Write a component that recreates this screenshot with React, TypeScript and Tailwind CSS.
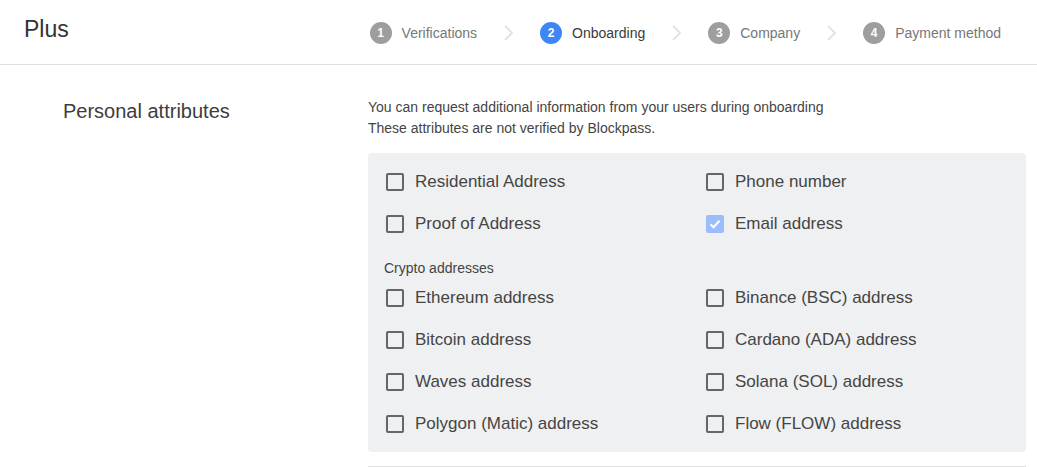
import React from "react"

const steps = [
  { n: 1, label: "Verifications" },
  { n: 2, label: "Onboarding", active: true },
  { n: 3, label: "Company" },
  { n: 4, label: "Payment method" },
]

const basic = [
  { label: "Residential Address" },
  { label: "Phone number" },
  { label: "Proof of Address" },
  { label: "Email address", checked: true },
]

const crypto = [
  "Ethereum address",
  "Binance (BSC) address",
  "Bitcoin address",
  "Cardano (ADA) address",
  "Waves address",
  "Solana (SOL) address",
  "Polygon (Matic) address",
  "Flow (FLOW) address",
]

function Chevron() {
  return (
    <svg width="13" height="18" viewBox="0 0 13 18" className="mx-[25px]">
      <path d="M3 2l7 7-7 7" fill="none" stroke="#e3e3e3" strokeWidth="2" />
    </svg>
  )
}

function Checkbox({ label, checked }: { label: string; checked?: boolean }) {
  return (
    <div className="h-[42px] flex items-center gap-[11px]">
      {checked ? (
        <span className="w-[18px] h-[18px] rounded-[2px] bg-[#9dbcfa] flex items-center justify-center">
          <svg width="14" height="14" viewBox="0 0 14 14">
            <path d="M2.5 7.2l3 3 6-6.4" fill="none" stroke="#fff" strokeWidth="2" />
          </svg>
        </span>
      ) : (
        <span className="w-[18px] h-[18px] rounded-[2px] border-2 border-[#666]" />
      )}
      <span className="text-[17px] text-[#454545]">{label}</span>
    </div>
  )
}

export default function App() {
  return (
    <div className="w-[1037px] h-[467px] bg-white overflow-hidden" style={{ fontFamily: '"Liberation Sans", Arial, sans-serif' }}>
      <div className="h-[65px] border-b border-[#e0e0e0] flex items-center justify-between pl-6 pr-[36px]">
        <div className="text-[23px] text-[#333] -mt-[6px]">Plus</div>
        <div className="flex items-center mt-[2px]">
          {steps.map((s, i) => (
            <div key={s.n} className="flex items-center">
              <div className="flex items-center gap-[10px]">
                <span
                  className={
                    "w-[22px] h-[22px] rounded-full text-white text-[12px] font-bold flex items-center justify-center " +
                    (s.active ? "bg-[#3d87f5]" : "bg-[#9e9e9e]")
                  }
                >
                  {s.n}
                </span>
                <span className={"text-[14px] " + (s.active ? "text-[#3a3a3a]" : "text-[#777]")}>{s.label}</span>
              </div>
              {i < steps.length - 1 && <Chevron />}
            </div>
          ))}
        </div>
      </div>

      <div className="flex pt-[32px]">
        <div className="w-[368px] pl-[63px] text-[20px] text-[#3d3d3d] -mt-[1px]">Personal attributes</div>
        <div className="w-[658px]">
          <div className="text-[14px] leading-[21px] text-[#444]">
            <p>You can request additional information from your users during onboarding</p>
            <p>These attributes are not verified by Blockpass.</p>
          </div>
          <div className="mt-[14px] bg-[#eff0f2] rounded-[4px] pl-[18px] pt-[8px] pb-[7px]">
            <div className="grid grid-cols-[320px_1fr]">
              {basic.map((b) => (
                <Checkbox key={b.label} label={b.label} checked={b.checked} />
              ))}
            </div>
            <div className="text-[14px] leading-[18px] text-[#444] mt-[14px] -ml-[2px]">Crypto addresses</div>
            <div className="grid grid-cols-[320px_1fr]">
              {crypto.map((c) => (
                <Checkbox key={c} label={c} />
              ))}
            </div>
          </div>
          <div className="mt-[14px] border-t border-[#e0e0e0]" />
        </div>
      </div>
    </div>
  )
}
